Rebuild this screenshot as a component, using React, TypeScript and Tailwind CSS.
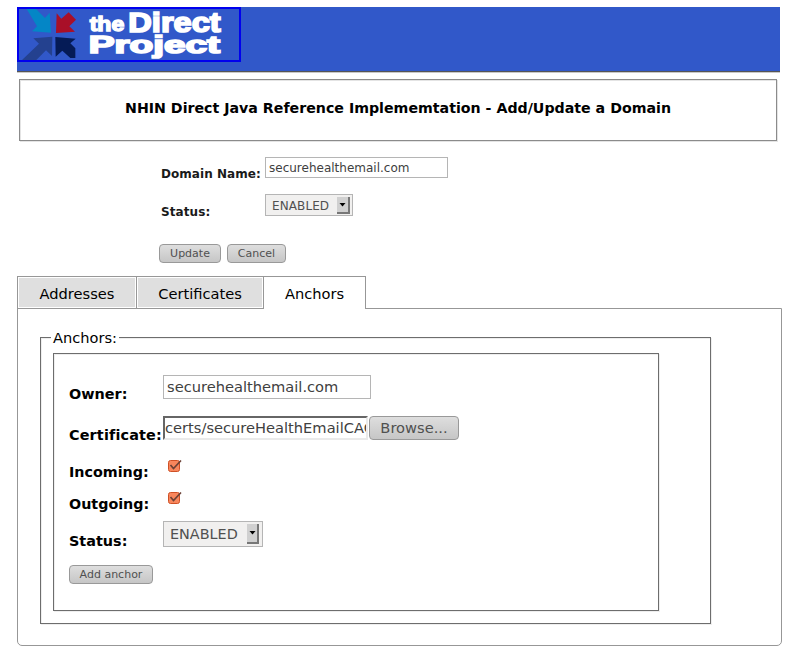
import React from 'react';

function Logo() {
  return (
    <div className="h-[55px] w-[224px] border-2 border-[#0000ee]">
      <svg width="220" height="51" viewBox="27 27 660 153" className="block" fontFamily="Liberation Sans, sans-serif" fontWeight="bold">
        <path fill="#0486c6" d="M50 27 L78 27 L105 54 L119 38 L123 98 L66 94 L81 79 Z" />
        <path fill="#a90f28" d="M140 40 L154 56 L176 37 L198 59 L178 79 L195 95 L138 99 Z" />
        <path fill="#24418f" d="M127 110 L126 168 L108 151 L79 180 L36 180 L87 131 L70 115 Z" />
        <path fill="#051b56" d="M136 111 L197 116 L181 130 L196 145 L196 174 L181 174 L157 152 L137 170 Z" />
        <g fill="#fff" stroke="#fff" strokeWidth="5">
          <text x="239" y="92" fontSize="58" textLength="104" lengthAdjust="spacingAndGlyphs" strokeWidth="4">the</text>
          <text x="355" y="95" fontSize="81" textLength="277" lengthAdjust="spacingAndGlyphs">Direct</text>
          <text x="236" y="159" fontSize="71" textLength="394" lengthAdjust="spacingAndGlyphs">Project</text>
        </g>
      </svg>
    </div>
  );
}

function Button({ className, children }: { className: string; children: React.ReactNode }) {
  return (
    <button className={`flex items-center justify-center rounded border border-[#999] bg-linear-to-b from-[#dedede] to-[#c6c6c6] text-[#505050] ${className}`}>
      {children}
    </button>
  );
}

function Select({ className, arrow }: { className: string; arrow: string }) {
  return (
    <div className={`flex items-center justify-between border border-[#b5b5b5] bg-[#f1f0ef] pl-1.5 text-[#505050] ${className}`}>
      <span>ENABLED</span>
      <span className={`flex items-center justify-center border-r-2 border-b-2 border-[#777] bg-[#d0d0d0] ${arrow}`}>
        <svg width="7" height="4" viewBox="0 0 7 4"><path d="M.5 0h6L3.5 3.5z" /></svg>
      </span>
    </div>
  );
}

function Check() {
  return (
    <svg width="15" height="14" viewBox="0 0 15 14" className="block">
      <rect x="1.5" y="1.5" width="11" height="11" rx="2" fill="#f8865c" stroke="#cf5025" />
      <path d="M3.5 6l3 3.5L14 1.5" fill="none" stroke="#6b4136" strokeWidth="1.7" />
    </svg>
  );
}

export default function App() {
  return (
    <div className="h-[667px] w-[800px] overflow-hidden bg-white pt-[7px] pl-[17px] font-['DejaVu_Sans',sans-serif] text-[14.4px] leading-5 text-black">
      <header className="h-[66px] w-[763px] border-b border-[#c9c9c9] bg-[#3158c9] shadow-[inset_0_-1px_0_#555]">
        <Logo />
      </header>
      <h1 className="mt-1.5 ml-0.5 h-[62px] w-[758px] border border-[#8b8b8b] pt-[18px] text-center text-[14.2px] font-bold shadow-[inset_1px_1px_0_#e4e4e4,1px_1px_0_#e4e4e4]">
        NHIN Direct Java Reference Implememtation - Add/Update a Domain
      </h1>
      <section className="h-[135px] pt-4 pl-[142px] text-[12px]">
        <div className="flex h-[21px] pl-0.5">
          <label className="w-[104px] pt-[7px] font-bold tracking-[0.05px] whitespace-nowrap text-[#1a1a1a]">Domain Name:</label>
          <input readOnly value="securehealthemail.com" className="h-[21px] w-[183px] border border-[#b5b5b5] pl-[3px] text-[12px] text-[#404040] outline-none" />
        </div>
        <div className="mt-4 flex h-[22px] pl-0.5">
          <label className="w-[104px] pt-2 font-bold tracking-[0.1px] text-[#1a1a1a]">Status:</label>
          <Select className="h-[22px] w-[88px] pt-px pr-[2px] tracking-[0.1px]" arrow="h-[17px] w-[13px]" />
        </div>
        <div className="mt-7 flex gap-1.5 text-[11px]">
          <Button className="h-[19px] w-[62px]">Update</Button>
          <Button className="h-[19px] w-[59px]">Cancel</Button>
        </div>
      </section>
      <nav className="relative z-10 flex h-[33px] text-center text-[14.65px] leading-[34px]">
        <div className="w-[119px] border border-r-0 border-[#979797] bg-[#dfdfdf] shadow-[inset_0_0_0_1px_#fff]">Addresses</div>
        <div className="w-[127px] border border-r-0 border-[#979797] bg-[#dfdfdf] shadow-[inset_0_0_0_1px_#fff]">Certificates</div>
        <div className="w-[103px] border border-b-0 border-[#979797] bg-white">Anchors</div>
      </nav>
      <main className="-mt-px h-[338px] w-[765px] rounded-b-[5px] border border-[#979797] pt-[19px] pl-[22px]">
        <section className="mt-[9px] h-[287px] w-[671px] border border-[#6d6d6d] pl-[12px] shadow-[inset_1px_1px_0_#eee,1px_1px_0_#eee]">
          <h2 className="-mt-2.5 -ml-0.5 h-5 w-[68px] bg-white pl-0.5 text-[14.6px]">Anchors:</h2>
          <div className="mt-[5px] h-[258px] w-[606px] border border-[#6d6d6d] pt-[21px] pl-[15px] shadow-[inset_1px_1px_0_#eee,1px_1px_0_#eee]">
            <div className="flex h-[41px]">
              <label className="w-[94px] pt-[9px] font-bold">Owner:</label>
              <input readOnly value="securehealthemail.com" className="h-6 w-[208px] border border-[#b5b5b5] pb-[2px] pl-[3px] text-[14.65px] text-[#404040] outline-none" />
            </div>
            <div className="flex h-[41px]">
              <label className="w-[94px] pt-[9px] font-bold tracking-[0.15px] whitespace-nowrap">Certificate:</label>
              <div className="h-6 w-[205px] overflow-hidden border-2 border-t-[#666] border-r-[#eaeaea] border-b-[#eaeaea] border-l-[#666] text-[14.65px] whitespace-nowrap text-[#404040]">certs/secureHealthEmailCACert.der</div>
              <Button className="ml-px h-6 w-[90px] text-[14.65px]">Browse...</Button>
            </div>
            <div className="flex h-8">
              <label className="w-[98px] pt-[5px] text-[14.3px] font-bold">Incoming:</label>
              <div className="pt-0.5"><Check /></div>
            </div>
            <div className="flex h-8">
              <label className="w-[98px] pt-[5px] text-[14.3px] font-bold">Outgoing:</label>
              <div className="pt-0.5"><Check /></div>
            </div>
            <div className="flex h-11">
              <label className="w-[94px] pt-[10px] font-bold">Status:</label>
              <Select className="h-[26px] w-[100px] pr-[3px]" arrow="h-5 w-3" />
            </div>
            <Button className="h-[19px] w-[84px] text-[11px]">Add anchor</Button>
          </div>
        </section>
      </main>
    </div>
  );
}
